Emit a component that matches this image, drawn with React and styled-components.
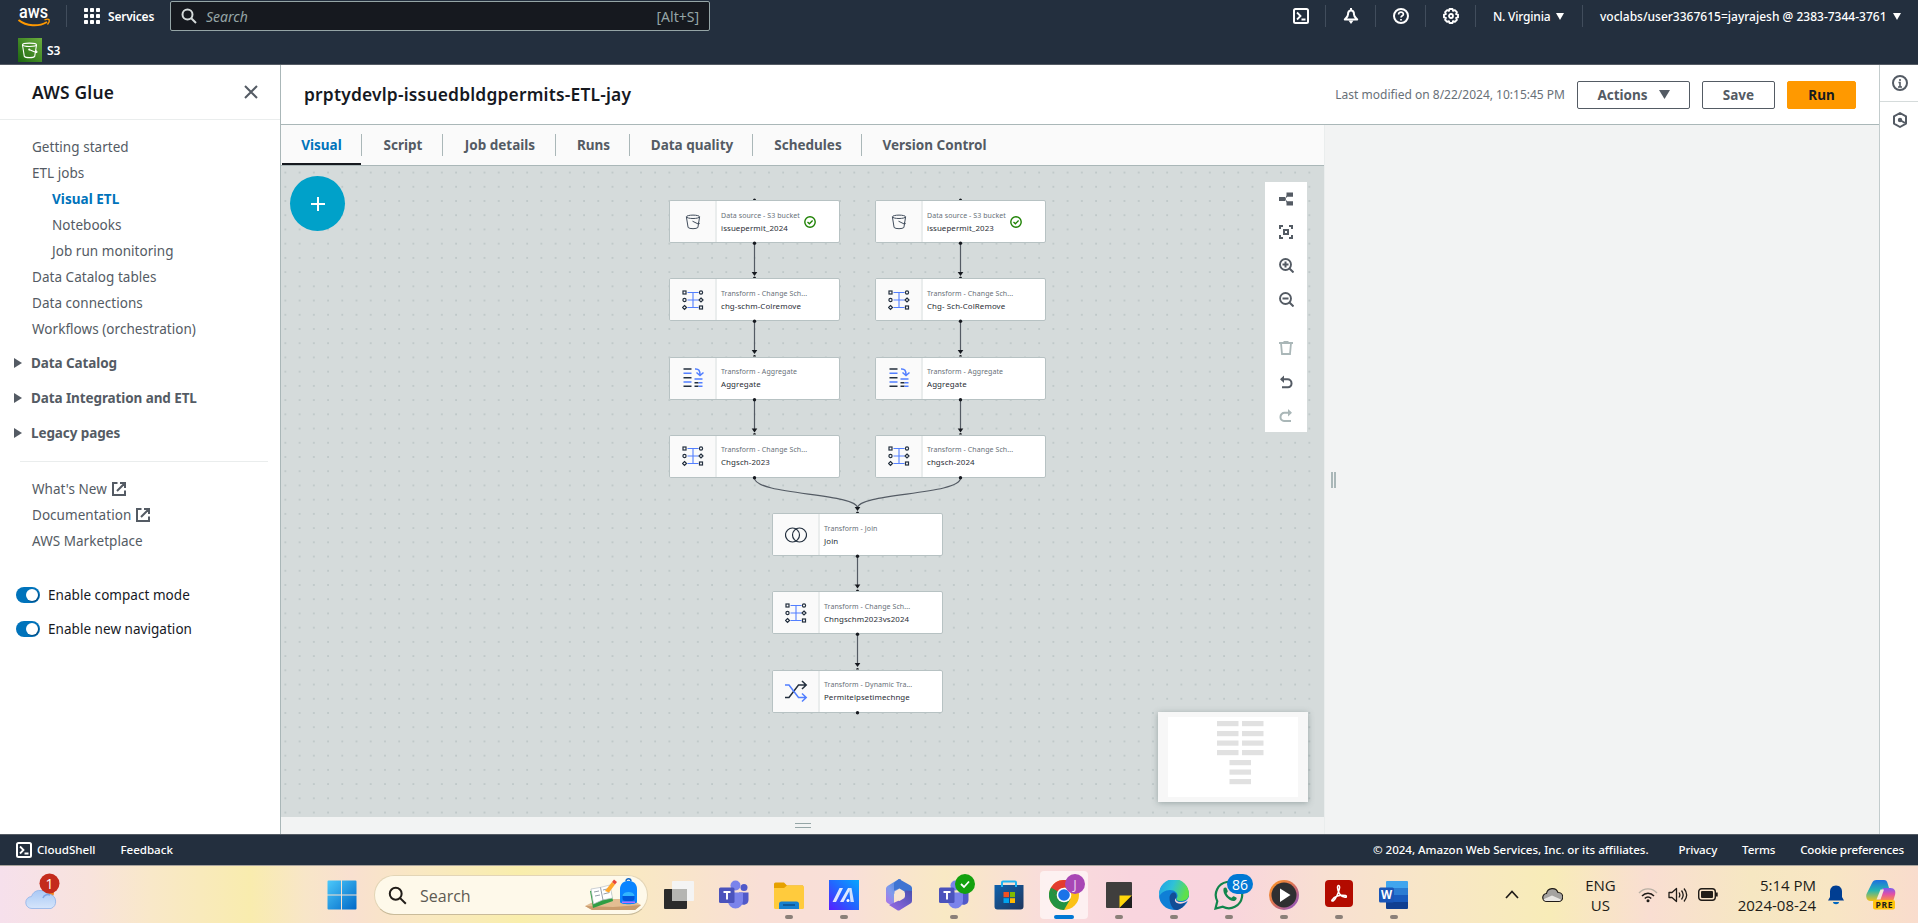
import React from "react";
import styled, { createGlobalStyle, css } from "styled-components";

const GlobalStyle = createGlobalStyle`
  *, *::before, *::after { box-sizing: border-box; }
  html, body { margin: 0; padding: 0; background: #fff; overflow: hidden; }
  body { font-family: "Noto Sans", "Open Sans", sans-serif; font-size: 14px; color: #16191f; }
  svg { display: block; flex: none; }
`;

const ember = css`
  font-family: "Noto Sans", "Open Sans", sans-serif;
  white-space: nowrap;
`;

const Screen = styled.div`
  width: 1918px;
  height: 923px;
  display: flex;
  flex-direction: column;
  overflow: hidden;
`;

/* ---------- console header ---------- */

const ConsoleHeader = styled.header`
  height: 65px;
  background: #232f3e;
  border-bottom: 1px solid #545b64;
  flex: none;
`;

const HeaderRow = styled.div`
  height: 32px;
  display: flex;
  align-items: center;
`;

const LogoBox = styled.div`
  width: 67px;
  height: 22px;
  padding-left: 18px;
  border-right: 1px solid #414d5c;
`;

const ServicesButton = styled.div`
  ${ember}
  display: flex;
  align-items: center;
  gap: 8px;
  width: 103px;
  padding-left: 17px;
  color: #fff;
  font-size: 12px;
  font-weight: 600;
  letter-spacing: -0.2px;
`;

const SearchBox = styled.div`
  ${ember}
  width: 540px;
  height: 30px;
  border: 1px solid #95a5a6;
  border-radius: 2px;
  background: #16191f;
  display: flex;
  align-items: center;
  padding: 0 10px 0 10px;
  color: #95a5a6;
  font-size: 14px;
`;

const SearchHint = styled.span`
  flex: 1;
  margin-left: 9px;
  font-style: italic;
`;

const HeaderTools = styled.div`
  margin-left: auto;
  display: flex;
  align-items: center;
`;

const HeaderCell = styled.div`
  ${ember}
  width: ${(p) => p.$w}px;
  height: 22px;
  display: flex;
  align-items: center;
  gap: 6px;
  padding-left: 17px;
  color: #fff;
  font-size: 12px;
  font-weight: 500;
  letter-spacing: ${(p) => p.$ls || 0}px;
  border-right: ${(p) => (p.$last ? "none" : "1px solid #414d5c")};
`;

const FavoritesRow = styled.div`
  ${ember}
  height: 32px;
  display: flex;
  align-items: center;
  gap: 5px;
  padding: 4px 0 0 18px;
  color: #fff;
  font-size: 12px;
  font-weight: 600;
`;

/* ---------- page frame ---------- */

const Body = styled.div`
  height: 769px;
  display: flex;
  flex: none;
`;

const SideNav = styled.nav`
  width: 281px;
  flex: none;
  background: #fff;
  border-right: 1px solid #aab7b8;
  display: flex;
  flex-direction: column;
`;

const SideHeader = styled.div`
  ${ember}
  height: 55px;
  display: flex;
  align-items: center;
  justify-content: space-between;
  padding: 0 22px 0 32px;
  border-bottom: 1px solid #eaeded;
  font-size: 17.4px;
  font-weight: 600;
  letter-spacing: 0.2px;
`;

const NavList = styled.div`
  padding: ${(p) => p.$top}px 0 0 32px;
`;

const NavLink = styled.div`
  ${ember}
  height: 26px;
  display: flex;
  align-items: center;
  gap: 5px;
  padding-left: ${(p) => (p.$sub ? 20 : 0)}px;
  font-size: 13.5px;
  letter-spacing: 0.04px;
  color: ${(p) => (p.$active ? "#0073bb" : "#545b64")};
  font-weight: ${(p) => (p.$active ? 700 : 400)};
`;

const NavSections = styled.div`
  padding: 3px 0 1px;
`;

const NavSection = styled.div`
  ${ember}
  height: 35px;
  display: flex;
  align-items: center;
  gap: 9px;
  padding-left: 14px;
  font-size: 13.5px;
  font-weight: 700;
  letter-spacing: -0.1px;
  color: #545b64;
`;

const NavRule = styled.div`
  height: 1px;
  margin: 10px 12px 0 20px;
  background: #eaeded;
`;

const Preferences = styled.div`
  padding-top: 24px;
`;

const ToggleRow = styled.div`
  ${ember}
  height: 34px;
  display: flex;
  align-items: center;
  gap: 8px;
  padding-left: 16px;
  font-size: 13.5px;
  letter-spacing: 0.04px;
  color: #16191f;
`;

const Toggle = styled.span`
  width: 24px;
  height: 16px;
  border-radius: 8px;
  background: #0073bb;
  display: flex;
  justify-content: flex-end;
  padding: 2px;
  &::after {
    content: "";
    width: 12px;
    height: 12px;
    border-radius: 50%;
    background: #fff;
    box-shadow: 1px 1px 1px rgba(0, 40, 80, 0.5);
  }
`;

const Main = styled.main`
  flex: 1;
  min-width: 0;
  display: flex;
  flex-direction: column;
`;

const JobHeader = styled.div`
  ${ember}
  height: 60px;
  flex: none;
  background: #fff;
  border-bottom: 1px solid #aab7b8;
  display: flex;
  align-items: center;
  padding: 0 23px 0 23px;
`;

const JobTitle = styled.h1`
  margin: 0;
  flex: 1;
  padding-bottom: 2px;
  font-size: 17.4px;
  font-weight: 600;
  letter-spacing: 0.2px;
  color: #16191f;
`;

const Modified = styled.span`
  font-size: 12px;
  color: #687078;
  margin-right: 12px;
  padding-bottom: 1px;
`;

const Button = styled.div`
  width: ${(p) => p.$w}px;
  height: 28px;
  margin-left: ${(p) => (p.$first ? 0 : 12)}px;
  display: flex;
  align-items: center;
  justify-content: center;
  gap: 11px;
  border: 1px solid ${(p) => (p.$primary ? "#ff9900" : "#545b64")};
  border-radius: 2px;
  background: ${(p) => (p.$primary ? "#ff9900" : "#fff")};
  color: ${(p) => (p.$primary ? "#16191f" : "#545b64")};
  font-size: 13.5px;
  font-weight: 700;
`;

const Workspace = styled.div`
  flex: 1;
  display: flex;
  min-height: 0;
`;

const Editor = styled.div`
  width: 1044px;
  flex: none;
  display: flex;
  flex-direction: column;
  border-right: 1px solid #eaeded;
`;

const TabBar = styled.div`
  height: 41px;
  flex: none;
  display: flex;
  align-items: center;
  background: #fafafa;
  border-bottom: 1px solid #aab7b8;
  padding-left: 1px;
`;

const Tab = styled.div`
  ${ember}
  width: ${(p) => p.$w}px;
  height: 40px;
  display: flex;
  align-items: center;
  justify-content: center;
  font-size: 13.5px;
  font-weight: 700;
  color: ${(p) => (p.$active ? "#0073bb" : "#545b64")};
  border-bottom: 2px solid ${(p) => (p.$active ? "#16191f" : "transparent")};
  padding: 1px 0 0 ${(p) => (p.$active ? 0 : 2)}px;
`;

const TabDivider = styled.span`
  width: 1px;
  height: 22px;
  background: #aab7b8;
`;

const Canvas = styled.div`
  position: relative;
  height: 651px;
  flex: none;
  background: #d5dbdb;
`;

const EdgeLayer = styled.svg`
  position: absolute;
  left: 0;
  top: 0;
`;

const AddButton = styled.div`
  position: absolute;
  left: 9px;
  top: 10px;
  width: 55px;
  height: 55px;
  border-radius: 50%;
  background: #00a1c9;
  display: flex;
  align-items: center;
  justify-content: center;
`;

const NodeCard = styled.div`
  position: absolute;
  left: ${(p) => p.$x}px;
  top: ${(p) => p.$y}px;
  width: 171px;
  height: 43px;
  display: flex;
  background: #fff;
  border: 1px solid #b7c2c3;
  border-radius: 2px;
  overflow: hidden;
`;

const NodeIcon = styled.div`
  width: 47px;
  flex: none;
  background: #fafafa;
  border-right: 2px solid #eaeded;
  display: flex;
  align-items: center;
  justify-content: center;
`;

const NodeText = styled.div`
  ${ember}
  padding-left: 4px;
  display: flex;
  flex-direction: column;
  justify-content: center;
  line-height: 12px;
`;

const NodeKind = styled.span`
  font-size: 7px;
  letter-spacing: 0.08px;
  color: #687078;
`;

const NodeName = styled.span`
  font-size: 7.9px;
  letter-spacing: 0.1px;
  color: #2a2e36;
`;

const NodeStatus = styled.div`
  display: flex;
  align-items: center;
  margin-left: 4px;
`;

const ToolPanel = styled.div`
  position: absolute;
  left: 984px;
  top: 16px;
  width: 42px;
  height: 250px;
  background: #fff;
  display: flex;
  flex-direction: column;
  align-items: center;
`;

const ToolButton = styled.div`
  height: 33.7px;
  margin-top: ${(p) => p.$gap || 0}px;
  display: flex;
  align-items: center;
  justify-content: center;
`;

const MiniMap = styled.div`
  position: absolute;
  left: 877px;
  top: 546px;
  width: 150px;
  height: 90px;
  padding: 5px 10px;
  background: #f7f7f7;
  box-shadow: 0 1px 6px rgba(80, 100, 100, 0.45);
`;

const MiniView = styled.div`
  height: 80px;
  background: #fff;
`;

const BottomHandle = styled.div`
  flex: 1;
  background: #f2f3f3;
  display: flex;
  justify-content: center;
  padding: 5px 0 0 1px;
`;

const Grip = styled.span`
  width: ${(p) => (p.$vertical ? 5 : 16)}px;
  height: ${(p) => (p.$vertical ? 16 : 5)}px;
  margin-top: ${(p) => (p.$vertical ? 0 : 1)}px;
  border: solid ${(p) => (p.$vertical ? "#aab7b8" : "#95a5a6")};
  border-width: ${(p) => (p.$vertical ? "0 2px" : "1px 0")};
`;

const SidePanel = styled.div`
  flex: 1;
  background: #f2f3f3;
  display: flex;
  align-items: center;
  padding-left: 6px;
`;

const Rail = styled.aside`
  width: 39px;
  flex: none;
  background: #fff;
  border-left: 1px solid #c3cccd;
`;

const RailCell = styled.div`
  height: ${(p) => (p.$line ? 37 : 35)}px;
  display: flex;
  align-items: center;
  justify-content: center;
  padding-left: 2px;
  border-bottom: ${(p) => (p.$line ? "1px solid #d5dbdb" : "none")};
`;

/* ---------- footer ---------- */

const Footer = styled.footer`
  ${ember}
  height: 32px;
  flex: none;
  background: #232f3e;
  border-top: 1px solid #545b64;
  border-bottom: 1px solid #a9a39c;
  display: flex;
  align-items: center;
  padding: 0 14px 0 16px;
  color: #fff;
  font-size: 11.6px;
  letter-spacing: -0.16px;
  font-weight: 500;
`;

const FooterGroup = styled.div`
  display: flex;
  gap: ${(p) => p.$gap}px;
  margin-left: ${(p) => p.$ml || "0"};
  padding-bottom: 1px;
  letter-spacing: ${(p) => p.$ls || "inherit"};
`;

const Copyright = styled.span`
  margin-right: 5px;
  letter-spacing: -0.04px;
`;

/* ---------- taskbar ---------- */

const Taskbar = styled.div`
  height: 57px;
  flex: none;
  display: flex;
  align-items: stretch;
  font-family: "Open Sans", "Noto Sans", sans-serif;
  background: linear-gradient(
    90deg,
    #f6e0ec 0, #f8e3dc 90px, #f9e8c9 150px, #f9ecae 250px, #f8e6c8 305px, #f9e0d0 350px,
    #f9e9c0 430px, #f9eeac 520px, #f9e8c4 640px, #f9dfd6 760px, #f9dfd8 850px, #f9e9c4 945px,
    #f9dcdc 1050px, #f9d5de 1130px, #f9d4de 1220px, #f8dfd2 1320px, #f8e6c8 1420px, #f8ecb8 1550px,
    #f9ded2 1650px, #f6e7c2 1750px, #f8e6c4 1830px, #f9dccd 1918px
  );
`;

const Weather = styled.div`
  width: 319px;
  padding: 7px 0 0 25px;
`;

const AppSlot = styled.div`
  position: relative;
  width: ${(p) => p.$w || 55}px;
  display: flex;
  align-items: center;
  justify-content: center;
  padding-top: 1px;
  > svg { position: relative; }
`;

const ActivePlate = styled.div`
  position: absolute;
  left: 4px;
  top: 5px;
  width: 48px;
  height: 48px;
  border-radius: 4px;
  background: rgba(255, 255, 255, 0.6);
`;

const Running = styled.i`
  position: absolute;
  bottom: 4px;
  left: 50%;
  width: ${(p) => (p.$on ? 20 : 8)}px;
  height: 4px;
  transform: translateX(-50%);
  border-radius: 2px;
  background: ${(p) => (p.$on ? "#0078d4" : "#8b8079")};
`;

const Badge = styled.span`
  position: absolute;
  left: ${(p) => p.$x}px;
  top: ${(p) => p.$y}px;
  width: ${(p) => p.$w}px;
  height: ${(p) => p.$h}px;
  border-radius: 12px;
  background: ${(p) => p.$bg};
  color: ${(p) => p.$fg || "#fff"};
  font-size: ${(p) => p.$fs || 14}px;
  display: flex;
  align-items: center;
  justify-content: center;
`;

const TaskSearch = styled.div`
  width: 274px;
  height: 40px;
  margin: 9px 3px 0 9px;
  border: 1px solid #e3d5b6;
  border-bottom-color: #c9bb9a;
  border-radius: 20px;
  background: #fef9ea;
  display: flex;
  align-items: center;
  padding: 0 5px 0 13px;
  color: #5d5a52;
  font-size: 16px;
`;

const TaskSearchLabel = styled.span`
  flex: 1;
  margin-left: 13px;
  padding-top: 1px;
`;

const Tray = styled.div`
  margin-left: auto;
  display: flex;
  align-items: center;
  padding-right: 22px;
  color: #201c18;
  font-size: 15px;
  line-height: 20px;
  white-space: nowrap;
`;

const TrayItem = styled.div`
  margin-left: ${(p) => p.$ml || 0}px;
  text-align: ${(p) => p.$align || "left"};
`;

/* ---------- icons ---------- */

const Svg = ({ w = 16, h, vb, children, ...rest }) => (
  <svg width={w} height={h || w} viewBox={vb || `0 0 ${w} ${h || w}`} fill="none" {...rest}>
    {children}
  </svg>
);

const AwsLogo = () => (
  <Svg w={33} h={22} overflow="visible">
    <text x="1" y="12.500" fontFamily="Roboto, sans-serif" fontWeight="500" fontSize="18" textLength="29" lengthAdjust="spacingAndGlyphs" fill="#fff">aws</text>
    <path d="M.5 15c8 6.500 20 7 28.500 2" stroke="#ff9900" strokeWidth="2" />
    <path d="M26.500 14.800c2.200-.8 4.200-.8 4.700 0 .4 1.500-.4 3.500-1.700 4.800" stroke="#ff9900" strokeWidth="1.400" />
  </Svg>
);

const GridIcon = () => (
  <Svg w={16}>
    {[0, 6, 12].map((y) => [0, 6, 12].map((x) => <rect key={`${x}-${y}`} x={x} y={y} width="4" height="4" rx=".8" fill="#fff" />))}
  </Svg>
);

const SearchIcon = ({ color = "#d5dbdb", size = 16, sw = 2 }) => (
  <Svg w={size} vb="0 0 16 16">
    <circle cx="6.500" cy="6.500" r="5" stroke={color} strokeWidth={sw} />
    <path d="M10 10l5 5" stroke={color} strokeWidth={sw} />
  </Svg>
);

const ShellIcon = () => (
  <Svg w={16}>
    <rect x="1" y="1" width="14" height="14" rx="1.500" stroke="#fff" strokeWidth="2" />
    <path d="M4 4.500l3.500 3.500L4 11.500M8.500 11.500h4" stroke="#fff" strokeWidth="1.800" />
  </Svg>
);

const BellIcon = () => (
  <Svg w={16}>
    <path d="M8 0v2.500M8 2.500C5.800 2.500 5 4.500 5 6.500c0 2-1.500 3-3.200 5h12.400C12.500 9.500 11 8.500 11 6.500c0-2-.8-4-3-4z" stroke="#fff" strokeWidth="2" strokeLinejoin="round" />
    <path d="M5.500 12.500h5L8 16z" fill="#fff" />
  </Svg>
);

const HelpIcon = () => (
  <Svg w={16}>
    <circle cx="8" cy="8" r="7" stroke="#fff" strokeWidth="2" />
    <path d="M5.600 6.400c0-3.200 4.800-3 4.800-.2C10.400 7.800 8 7.800 8 9.600M8 11v1.600" stroke="#fff" strokeWidth="1.700" />
  </Svg>
);

const GearIcon = () => (
  <Svg w={16}>
    <path d="M6.500 1h3l.6 1.900 1.800-.8 2 2-.8 1.900 1.900.6v2.800l-1.900.6.8 1.900-2 2-1.800-.8-.6 1.900h-3l-.6-1.900-1.800.8-2-2 .8-1.900L1 9.400V6.600l1.900-.6-.8-1.900 2-2 1.800.8z" stroke="#fff" strokeWidth="1.900" strokeLinejoin="round" />
    <circle cx="8" cy="8" r="2" stroke="#fff" strokeWidth="1.800" />
  </Svg>
);

const Caret = ({ color = "#fff", w = 8, h = 7 }) => (
  <Svg w={w} h={h} vb="0 0 8 7" preserveAspectRatio="none">
    <path d="M0 0h8L4 7z" fill={color} />
  </Svg>
);

const S3Icon = () => (
  <Svg w={24}>
    <defs>
      <linearGradient id="s3g" x1="0" y1="1" x2="1" y2="0">
        <stop offset="0" stopColor="#1b660f" />
        <stop offset="1" stopColor="#6cae3e" />
      </linearGradient>
    </defs>
    <rect width="24" height="24" fill="url(#s3g)" />
    <ellipse cx="11.500" cy="6.800" rx="7" ry="1.700" stroke="#fff" strokeWidth="1.100" />
    <path d="M4.500 7l1.800 11.300c1.500 1.800 8.900 1.800 10.400 0L18.500 7M11 11.500l6.500 2.800c2 .5 2-.7.200-1.800" stroke="#fff" strokeWidth="1.100" />
    <circle cx="11.200" cy="11.500" r="1" fill="#fff" />
  </Svg>
);

const CloseIcon = () => (
  <Svg w={14}>
    <path d="M1 1l12 12M13 1L1 13" stroke="#545b64" strokeWidth="2" />
  </Svg>
);

const ExternalIcon = () => (
  <Svg w={14}>
    <path d="M5.500 1H1v12h12V8.500M8 1h5v5M13 1L5 9" stroke="#545b64" strokeWidth="2" />
  </Svg>
);

const Triangle = () => (
  <Svg w={8} h={10}>
    <path d="M0 0l8 5-8 5z" fill="#545b64" />
  </Svg>
);

const InfoIcon = () => (
  <Svg w={16}>
    <circle cx="8" cy="8" r="7" stroke="#545b64" strokeWidth="2" />
    <path d="M8 4v2M6.500 7.500H8v4M6 12h4" stroke="#545b64" strokeWidth="1.600" />
  </Svg>
);

const HexIcon = () => (
  <Svg w={16}>
    <path d="M8 1l6 3.400v7.200L8 15l-6-3.400V4.400z" stroke="#545b64" strokeWidth="2" strokeLinejoin="round" />
    <circle cx="8" cy="8" r="2.200" fill="#545b64" />
    <path d="M8 8l5 3" stroke="#545b64" strokeWidth="2" />
  </Svg>
);

const BucketIcon = () => (
  <Svg w={16}>
    <ellipse cx="8" cy="2.800" rx="6.600" ry="1.700" stroke="#414d5c" />
    <path d="M1.400 3l1.700 10.500c1.400 1.600 8.400 1.600 9.800 0L14.600 3M7.500 7.200l5.500 2.700c2 .4 1.500-.6 0-1.700" stroke="#414d5c" />
  </Svg>
);

const SchemaIcon = () => (
  <Svg w={22}>
    <path d="M5.500 3.500h11M5.500 11h11M5.500 18.500h11M11 3.500v15" stroke="#527fff" strokeWidth="1.100" />
    <g stroke="#232f3e" strokeWidth="1.200" fill="#fff">
      <rect x="1" y="2" width="3" height="3" />
      <circle cx="2.500" cy="11" r="1.600" />
      <path d="M2.500 16.500l2 2-2 2-2-2z" />
      <circle cx="19" cy="3.500" r="1.600" />
      <path d="M19 9l2 2-2 2-2-2z" />
      <rect x="17.500" y="17" width="3" height="3" />
    </g>
  </Svg>
);

const AggregateIcon = () => (
  <Svg w={22}>
    <path d="M1.500 2h8M1.500 10.700h8M1.500 19.300h8M12.500 15.800h4M12.500 19.300h4" stroke="#232f3e" strokeWidth="1.500" />
    <path d="M1.500 6.300h8M1.500 15h8M12.500 12h8M16.500 15.800h4M16.500 19.300h4M13 2c4-.3 5 1.500 5 6M14.500 5.500L18 8.600l3.500-3.100" stroke="#527fff" strokeWidth="1.500" />
  </Svg>
);

const JoinIcon = () => (
  <Svg w={22}>
    <circle cx="7.500" cy="11" r="7" stroke="#232f3e" strokeWidth="1.200" />
    <circle cx="14.500" cy="11" r="7" stroke="#232f3e" strokeWidth="1.200" />
  </Svg>
);

const ShuffleIcon = () => (
  <Svg w={24}>
    <path d="M1 18.500h4L14.500 6H22M18 2l4.200 4L18 10" stroke="#232f3e" strokeWidth="1.500" />
    <path d="M1 6h4l9.500 12.500H22M18 14.500l4.200 4-4.200 4" stroke="#527fff" strokeWidth="1.500" />
  </Svg>
);

const CheckIcon = () => (
  <Svg w={12}>
    <circle cx="6" cy="6" r="5.200" stroke="#1d8102" strokeWidth="1.400" />
    <path d="M3.500 6l1.900 1.800L8.600 4.500" stroke="#1d8102" strokeWidth="1.300" />
  </Svg>
);

const TOOL_GREY = "#545b64";
const TOOL_OFF = "#aab7b8";

const tools = [
  <Svg w={14}>
    <path d="M3 7h3l3-4.500M6 7l3 4.500" stroke={TOOL_GREY} />
    <path d="M0 5h6v4H0zM7.500 .6H14v4.200H7.500zM7.500 9.200H14v4.200H7.500z" fill={TOOL_GREY} />
  </Svg>,
  <Svg w={14}>
    <path d="M1 4V1h3M10 1h3v3M13 10v3h-3M4 13H1v-3M5 5h4v4H5z" stroke={TOOL_GREY} strokeWidth="2" />
  </Svg>,
  <Svg w={15}>
    <circle cx="6.500" cy="6.500" r="5.500" stroke={TOOL_GREY} strokeWidth="1.900" />
    <path d="M3.500 6.500h6M6.500 3.500v6M10.500 10.500l4 4" stroke={TOOL_GREY} strokeWidth="2" />
  </Svg>,
  <Svg w={15}>
    <circle cx="6.500" cy="6.500" r="5.500" stroke={TOOL_GREY} strokeWidth="1.900" />
    <path d="M3.500 6.500h6M10.500 10.500l4 4" stroke={TOOL_GREY} strokeWidth="2" />
  </Svg>,
  <Svg w={14}>
    <path d="M0 2h14M4.500 1h5M2 2l1 11h8l1-11" stroke={TOOL_OFF} strokeWidth="1.800" />
  </Svg>,
  <Svg w={14}>
    <path d="M2 4.200h6.500a4 4 0 0 1 4 4v.6a3.500 3.500 0 0 1-3.500 3.500H3" stroke={TOOL_GREY} strokeWidth="2" />
    <path d="M5 .5v7.400L1 4.200z" fill={TOOL_GREY} />
  </Svg>,
  <Svg w={14}>
    <path d="M12 4.800H5.500a4 4 0 0 0-4 4v.6a3.500 3.500 0 0 0 3.500 3.500h7" stroke={TOOL_OFF} strokeWidth="2" />
    <path d="M9 1.100v7.400l4-3.700z" fill={TOOL_OFF} />
  </Svg>,
];

/* ---------- taskbar artwork ---------- */

const WeatherArt = () => (
  <Svg w={40} h={40}>
    <defs>
      <linearGradient id="cloud" x1="0" y1="0" x2="0" y2="1">
        <stop offset="0" stopColor="#a9c8f5" />
        <stop offset="1" stopColor="#d5e5fb" />
      </linearGradient>
    </defs>
    <circle cx="24" cy="20" r="5" fill="#f58a1f" />
    <path d="M7 35.500a6 6 0 0 1-.5-12A9 9 0 0 1 22 20.500a8 8 0 0 1 3 .8 7.500 7.500 0 0 1 1 14.200z" fill="url(#cloud)" stroke="#8fb2e8" strokeWidth=".8" />
    <path d="M18 25c1-3 4-4 7-3" stroke="#7fa5e4" strokeWidth="1.500" />
    <circle cx="24.500" cy="10.500" r="10" fill="#c42b1c" />
    <text x="24.500" y="15.500" fontSize="14" fill="#fff" textAnchor="middle" fontFamily="Open Sans, sans-serif">1</text>
  </Svg>
);

const StartArt = () => (
  <Svg w={30}>
    <defs>
      <linearGradient id="win" x1="0" y1="0" x2="1" y2="1">
        <stop offset="0" stopColor="#4cc9fa" />
        <stop offset="1" stopColor="#0068c8" />
      </linearGradient>
    </defs>
    <path d="M.5 1.500A1 1 0 0 1 1.500.5H14v14H.5zM15 .5h13.500a1 1 0 0 1 1 1v13H15zM.5 15.500H14v14H1.500a1 1 0 0 1-1-1zM15 15.500h14.500v13a1 1 0 0 1-1 1H15z" fill="url(#win)" />
  </Svg>
);

const SchoolArt = () => (
  <Svg w={58} h={34}>
    <path d="M1 28l14-7h32l10 6-6 5H8z" fill="#e3bd92" />
    <path d="M8 32h43l6-5-28 2-28-1z" fill="#c99b6d" />
    <path d="M6 13l20-4 3 14-20 7z" fill="#2f9e44" />
    <path d="M7 11l9-1.500 10-2.500 2.500 13-10 2-9 4z" fill="#fff" stroke="#b7bec6" strokeWidth=".7" />
    <path d="M16.500 9.500L19 22M10 14l5-1M11 18l5-1M19 12l6-1.500M19.500 16l6-1.500" stroke="#8a94a0" strokeWidth=".9" />
    <path d="M21 13l7-9 3 2.500-6 8z" fill="#ffa62b" />
    <path d="M28 4l2-2.500L33 4l-2 2.500z" fill="#e8473a" />
    <path d="M36 11c0-11 17-11 17 0v13c0 3-17 3-17 0z" fill="#0a84ff" />
    <path d="M42 3c0-3 5-3 5 0" stroke="#1067c7" strokeWidth="1.400" />
    <rect x="38.500" y="15" width="12" height="8" rx="3" fill="#0057d9" />
    <path d="M38.500 17c1-4 11-4 12 0v1h-12z" fill="#32b5ff" />
    <path d="M38 23.500h13V25H38z" fill="#b96cff" />
  </Svg>
);

const TaskViewArt = () => (
  <Svg w={30}>
    <rect x="0" y="9" width="23" height="20" rx="1" fill="#2b2b2b" />
    <rect x="8" y="1" width="22" height="20" rx="1" fill="#f4f4f4" />
    <rect x="8" y="9" width="15" height="12" fill="#b5b5b2" />
  </Svg>
);

const TeamsArt = () => (
  <Svg w={30}>
    <circle cx="25" cy="7.500" r="3.500" fill="#5059c9" />
    <path d="M20 12.500h9.500V20a5 5 0 0 1-9.500 2z" fill="#5059c9" />
    <circle cx="16.500" cy="5.500" r="5" fill="#7b83eb" />
    <path d="M9 12.500h15V21a7.500 7.500 0 0 1-15 0z" fill="#7b83eb" />
    <rect x="0" y="7.500" width="15.500" height="15.500" rx="1.500" fill="#4b53bc" />
    <path d="M4.500 12h7M8 12v7.500" stroke="#fff" strokeWidth="1.900" />
  </Svg>
);

const FolderArt = () => (
  <Svg w={30}>
    <path d="M0 4a1.500 1.500 0 0 1 1.500-1.500H10l3 3h16V15H0z" fill="#e6a100" />
    <path d="M0 8h10l3-2.500h15.500A1.500 1.500 0 0 1 30 7v20.500A1.500 1.500 0 0 1 28.500 29h-27A1.500 1.500 0 0 1 0 27.500z" fill="#ffcb3d" />
    <path d="M5 29v-5a2.500 2.500 0 0 1 2.500-2.500h15A2.500 2.500 0 0 1 25 24v5z" fill="#1780cf" />
    <path d="M9 25h12" stroke="#0b4a83" strokeWidth="1.400" />
  </Svg>
);

const MyAsusArt = () => (
  <Svg w={30}>
    <defs>
      <linearGradient id="asus" x1="0" y1="1" x2="1" y2="0">
        <stop offset="0" stopColor="#5a1dff" />
        <stop offset=".5" stopColor="#2266ff" />
        <stop offset="1" stopColor="#05a7ff" />
      </linearGradient>
    </defs>
    <rect width="30" height="30" fill="url(#asus)" />
    <path d="M3.500 22L10.500 8H14L7 22zM11 22L19 8h3l-7.500 14z" fill="#fff" opacity=".85" />
    <path d="M20 8h2.500L25 22h-3.500z" fill="#cfe0ff" />
    <circle cx="19" cy="20.500" r="1.500" fill="#fff" />
  </Svg>
);

const M365Art = () => (
  <Svg w={32}>
    <defs>
      <linearGradient id="m3a" x1=".8" y1="0" x2="0" y2="1">
        <stop offset="0" stopColor="#4a83d8" />
        <stop offset=".5" stopColor="#7f9cec" />
        <stop offset="1" stopColor="#b56be8" />
      </linearGradient>
      <linearGradient id="m3b" x1="0" y1="1" x2="1" y2="0">
        <stop offset="0" stopColor="#9a6be6" />
        <stop offset="1" stopColor="#4a50b0" />
      </linearGradient>
    </defs>
    <path d="M16 0l2 .6V11l-7 4v13L4.500 24Q3 23 3 21.500V9.500Q3 8 4.500 7z" fill="url(#m3a)" />
    <path d="M16 0l11.500 6.500Q29 7.500 29 9v9l-7-4-6-4.500-5 2V4z" fill="#3f74d2" />
    <path d="M29 12v10q0 1.500-1.500 2.500L17 31q-1.500 1-3 0l-8-5 10-4.500 6-4v-6z" fill="url(#m3b)" />
    <path d="M16.500 9.500l5 3v6.500l-5 3-5-3v-6.500z" fill="#f9e6d2" />
  </Svg>
);

const StoreArt = () => (
  <Svg w={30}>
    <defs>
      <linearGradient id="sto" x1="0" y1="0" x2="1" y2="1">
        <stop offset="0" stopColor="#0f62ae" />
        <stop offset="1" stopColor="#20365c" />
      </linearGradient>
    </defs>
    <path d="M8 7V2.500A1 1 0 0 1 9 1.500h12a1 1 0 0 1 1 1V7" stroke="#1fb4f2" strokeWidth="2" />
    <path d="M.5 5h29v21.500a3 3 0 0 1-3 3h-23a3 3 0 0 1-3-3z" fill="url(#sto)" />
    <path d="M7 5h2v2H7zM21 5h2v2h-2z" fill="#1fb4f2" />
    <path d="M9.500 12H15v5.200H9.500z" fill="#f25022" />
    <path d="M16 12h5v5.200h-5z" fill="#7fba00" />
    <path d="M9.500 18.200H15V23H9.500z" fill="#00a4ef" />
    <path d="M16 18.200h5V23h-5z" fill="#ffb900" />
  </Svg>
);

const ChromeArt = () => (
  <Svg w={30}>
    <circle cx="15" cy="15" r="15" fill="#fbc116" />
    <path d="M2 7.500A15 15 0 0 0 15 30l6.500-11.300L15 15z" fill="#229342" />
    <path d="M2 7.500A15 15 0 0 1 28 7.500H15v7.500L8.500 18.700z" fill="#e33b2e" />
    <path d="M2 7.500L8.500 18.700 15 15z" fill="#229342" />
    <circle cx="15" cy="15" r="7.300" fill="#fff" />
    <circle cx="15" cy="15" r="5.800" fill="#1a73e8" />
  </Svg>
);

const StickyArt = () => (
  <Svg w={26}>
    <rect width="26" height="26" rx="1" fill="#3f3e3d" />
    <path d="M13.500 26V13.500H26z" fill="#ffd60a" />
    <path d="M13.500 26L26 13.500V26z" fill="#1f1f1f" />
  </Svg>
);

const EdgeArt = () => (
  <Svg w={30}>
    <defs>
      <linearGradient id="edg" x1="0" y1="0" x2="1" y2=".3">
        <stop offset="0" stopColor="#1f9fe6" />
        <stop offset=".5" stopColor="#2fc1d8" />
        <stop offset="1" stopColor="#5fe04a" />
      </linearGradient>
    </defs>
    <circle cx="15" cy="15" r="15" fill="#0f7fd6" />
    <path d="M0 14A15 15 0 0 1 30 14c0 5-4 7-8 7-3 0-5-1-4.500-2.500C20 16 18 10 11 10 6 10 1.500 13 0 17z" fill="url(#edg)" />
    <path d="M10.500 18c0-4 3-6 5-5.500 2 1 2.500 4 1.500 6-.5 2 2 3.500 5 3.500 2.500 0 4.500-1 5.800-1.600C26 26 21 30 17 30c-4-1-6.500-7-6.500-12z" fill="#124d96" />
    <path d="M17 18c-1 3 3 4.500 6 4 3-.5 5-1.500 7-5l1 4-3.500.5C25 23.500 21 24.500 18 23c-2-1-3-3-1-5z" fill="#f9d5de" />
  </Svg>
);

const WhatsAppArt = () => (
  <Svg w={30}>
    <path d="M1.500 28.500l1.800-7.300A13.200 13.200 0 1 1 8.800 26.700z" stroke="#12854d" strokeWidth="2.200" />
    <path d="M9.500 8.500c1-1.500 2.800-1.500 3.300 0l1 2.800c0 1-1.500 1.500-1 2.500 1 2 2.500 3.200 4.500 4 1 0 1.500-1.800 2.500-1.500l2.500 1.300c1 .7 0 3-2 3.400-5 .5-12-6.500-10.800-12.500z" fill="#12854d" />
  </Svg>
);

const MediaArt = () => (
  <Svg w={30}>
    <defs>
      <linearGradient id="med" x1="0" y1="0" x2="1" y2="1">
        <stop offset="0" stopColor="#ff9a1f" />
        <stop offset=".5" stopColor="#d9705a" />
        <stop offset="1" stopColor="#7d4fd8" />
      </linearGradient>
    </defs>
    <circle cx="15" cy="15" r="15" fill="url(#med)" />
    <circle cx="15" cy="15" r="12.500" fill="#2f2f31" />
    <path d="M11 8.500l10.500 6.500L11 22z" fill="#fff" />
  </Svg>
);

const AcrobatArt = () => (
  <Svg w={28} h={30}>
    <rect y="0" width="28" height="27" rx="4" fill="#b30b00" />
    <path d="M7 20c2-3.500 8-5.500 13.500-4.500 1.500.5 1 2-.5 1.800-4 0-7.300-4.800-7.500-9.600-.2-3 2.300-3 2.100 0C14 12.500 10.500 19.500 8 21c-1 .3-1.500-.2-1-1z" stroke="#fff" strokeWidth="1.500" />
  </Svg>
);

const WordArt = () => (
  <Svg w={30}>
    <path d="M7 2a1 1 0 0 1 1-1h20a1 1 0 0 1 1 1v6.500H7z" fill="#41a5ee" />
    <path d="M7 8h22v7H7z" fill="#2b7cd3" />
    <path d="M7 15h22v7H7z" fill="#185abd" />
    <path d="M7 22h22v6a1 1 0 0 1-1 1H8a1 1 0 0 1-1-1z" fill="#103f91" />
    <rect x="0" y="7.500" width="15" height="15" rx="1.500" fill="#1a56b8" />
    <text x="7.500" y="19" textAnchor="middle" fontSize="11.500" fontWeight="700" fontFamily="Open Sans, sans-serif" fill="#fff">W</text>
  </Svg>
);

const ChevronUp = () => (
  <Svg w={14} h={9}>
    <path d="M1 8l6-6.500L13 8" stroke="#201c18" strokeWidth="1.700" />
  </Svg>
);

const CloudIcon = () => (
  <Svg w={21} h={16}>
    <path d="M5 14.500a4 4 0 0 1-.5-8A6 6 0 0 1 16 5.500a4.500 4.500 0 0 1 .5 9z" fill="#a5a3a0" stroke="#201c18" strokeWidth="1.200" />
    <path d="M5 14c-2 0-3-.8-3.500-1.800L10 8.500l9 4c-.5 1-1.500 1.500-2.500 1.500z" fill="#e8e6e2" />
  </Svg>
);

const WifiIcon = () => (
  <Svg w={20} h={16}>
    <path d="M1 6c5-5.500 13-5.500 18 0" stroke="#b9b0a4" strokeWidth="1.400" />
    <path d="M4 9c3.300-3.700 8.700-3.700 12 0M6.800 11.600c1.900-2 4.500-2 6.400 0" stroke="#201c18" strokeWidth="1.500" />
    <circle cx="10" cy="13.800" r="1.500" fill="#201c18" />
  </Svg>
);

const SpeakerIcon = () => (
  <Svg w={20} h={16}>
    <path d="M1 5.500h3L8.500 1.500v13L4 10.500H1z" stroke="#201c18" strokeWidth="1.300" strokeLinejoin="round" />
    <path d="M11 5.500c1 1.500 1 3.500 0 5M13.500 3.500c2 2.700 2 6.300 0 9M16 1.500c3.300 4 3.300 9 0 13" stroke="#201c18" strokeWidth="1.300" />
  </Svg>
);

const BatteryIcon = () => (
  <Svg w={20} h={13}>
    <rect x=".7" y=".7" width="16.600" height="11.600" rx="3" stroke="#201c18" strokeWidth="1.400" />
    <rect x="3" y="3" width="12" height="7" rx="1" fill="#201c18" />
    <path d="M18.800 4.500v4" stroke="#201c18" strokeWidth="1.800" />
  </Svg>
);

const TrayBell = () => (
  <Svg w={18} h={20}>
    <path d="M9 .5c-4 0-6 3-6 6V12l-2 3.500h16L15 12V6.500c0-3-2-6-6-6z" fill="#003e92" />
    <path d="M6 17h6c0 3-6 3-6 0z" fill="#0067c0" />
  </Svg>
);

const CopilotArt = () => (
  <Svg w={30} h={30}>
    <defs>
      <linearGradient id="cpa" x1="0" y1="0" x2="0" y2="1">
        <stop offset="0" stopColor="#1d6fe0" />
        <stop offset=".5" stopColor="#27b5b0" />
        <stop offset="1" stopColor="#f2c21a" />
      </linearGradient>
      <linearGradient id="cpb" x1="0" y1="0" x2="0" y2="1">
        <stop offset="0" stopColor="#7b5cf0" />
        <stop offset=".5" stopColor="#e04fa8" />
        <stop offset="1" stopColor="#f98a4b" />
      </linearGradient>
    </defs>
    <path d="M6 3C7 1 8 0 10.500 0H18c2 0 3 1 3.500 3L23 8h-6l-5 13H5c-4 0-5.500-3-4.500-7z" fill="url(#cpa)" />
    <path d="M17 8h7.500c4 0 5.500 3 4.500 7l-1.500 5H12z" fill="url(#cpb)" />
    <path d="M14.500 9.500h3.500l-3.500 10h-4z" fill="#f6e7d8" />
    <rect x="7" y="20" width="22" height="9.500" rx="2" fill="#ffc40d" />
    <text x="18" y="27.800" textAnchor="middle" fontSize="8.500" fontWeight="700" fontFamily="Open Sans, sans-serif" fill="#201c18" textLength="17">PRE</text>
  </Svg>
);

/* ---------- data ---------- */

const nodes = [
  { x: 388, y: 34, kind: "Data source - S3 bucket", name: "issuepermit_2024", icon: BucketIcon, ok: true },
  { x: 594, y: 34, kind: "Data source - S3 bucket", name: "issuepermit_2023", icon: BucketIcon, ok: true },
  { x: 388, y: 112, kind: "Transform - Change Sch...", name: "chg-schm-Colremove", icon: SchemaIcon },
  { x: 594, y: 112, kind: "Transform - Change Sch...", name: "Chg- Sch-ColRemove", icon: SchemaIcon },
  { x: 388, y: 190.5, kind: "Transform - Aggregate", name: "Aggregate", icon: AggregateIcon },
  { x: 594, y: 190.5, kind: "Transform - Aggregate", name: "Aggregate", icon: AggregateIcon },
  { x: 388, y: 268.5, kind: "Transform - Change Sch...", name: "Chgsch-2023", icon: SchemaIcon },
  { x: 594, y: 268.5, kind: "Transform - Change Sch...", name: "chgsch-2024", icon: SchemaIcon },
  { x: 491, y: 347, kind: "Transform - Join", name: "Join", icon: JoinIcon },
  { x: 491, y: 425, kind: "Transform - Change Sch...", name: "Chngschm2023vs2024", icon: SchemaIcon },
  { x: 491, y: 503.5, kind: "Transform - Dynamic Tra...", name: "Permitelpsetimechnge", icon: ShuffleIcon },
];

const links = [
  [473.5, 77, 112], [473.5, 155, 190], [473.5, 233.5, 268.5],
  [679.5, 77, 112], [679.5, 155, 190], [679.5, 233.5, 268.5],
  [576.5, 390, 424.5], [576.5, 468, 503],
];

const tabs = [
  ["Visual", 79], ["Script", 80], ["Job details", 112], ["Runs", 73],
  ["Data quality", 122], ["Schedules", 108], ["Version Control", 143],
];

const apps = [
  { art: TaskViewArt }, { art: TeamsArt }, { art: FolderArt, run: true }, { art: MyAsusArt, run: true },
  { art: M365Art },
  { art: TeamsArt, run: true, badge: { x: 29, y: 8, w: 20, h: 20, bg: "#13a10e", check: true } },
  { art: StoreArt },
  { art: ChromeArt, run: true, on: true, badge: { x: 29, y: 8, w: 20, h: 20, bg: "#a847b5", fg: "#ecd3f0", text: "J", fs: 13 } },
  { art: StickyArt, run: true }, { art: EdgeArt, run: true },
  { art: WhatsAppArt, run: true, badge: { x: 26, y: 8, w: 26, h: 20, bg: "#0078d4", text: "86", fs: 14 } },
  { art: MediaArt, run: true }, { art: AcrobatArt, run: true }, { art: WordArt, run: true },
];

const Edges = () => (
  <EdgeLayer width="1043" height="651" viewBox="0 0 1043 651">
    <defs>
      <pattern id="dots" x="3.400" y="5.600" width="14.222" height="14.222" patternUnits="userSpaceOnUse">
        <circle cx="1" cy="1" r=".75" fill="#a3b0b1" />
      </pattern>
    </defs>
    <rect width="1030" height="651" fill="url(#dots)" />
    {links.map(([x, a, b]) => (
      <g key={`${x}-${a}`}>
        <path d={`M${x} ${a}V${b - 3}`} stroke="#545b64" strokeWidth="1.200" />
        <path d={`M${x - 2.8} ${b - 6}h5.600l-2.800 4z`} fill="#16191f" />
      </g>
    ))}
    <path d="M473.500 312C473.500 329 576.500 327 576.500 342M679.500 312C679.500 329 576.500 327 576.500 342" stroke="#545b64" strokeWidth="1.200" fill="none" />
    <path d="M573.700 341h5.600l-2.800 4z" fill="#16191f" />
  </EdgeLayer>
);

const Ports = () => (
  <EdgeLayer width="1043" height="651" viewBox="0 0 1043 651">
    {nodes.map((n) => (
      <g key={`${n.x}-${n.y}`} fill="#16191f">
        <path d={`M${n.x + 84} ${n.y}a1.500 1.500 0 0 1 3 0z`} />
        <circle cx={n.x + 85.5} cy={n.y + 43.3} r="1.700" />
      </g>
    ))}
  </EdgeLayer>
);

const bars = [0, 10, 19.5, 29]
  .flatMap((y) => [[49, y], [74, y]])
  .concat([[61.5, 39], [61.5, 48.5], [61.5, 58]]);

export default function App() {
  return (
    <Screen>
      <GlobalStyle />
      <ConsoleHeader>
        <HeaderRow>
          <LogoBox><AwsLogo /></LogoBox>
          <ServicesButton><GridIcon />Services</ServicesButton>
          <SearchBox>
            <SearchIcon />
            <SearchHint>Search</SearchHint>
            <span>[Alt+S]</span>
          </SearchBox>
          <HeaderTools>
            <HeaderCell $w={50}><ShellIcon /></HeaderCell>
            <HeaderCell $w={50}><BellIcon /></HeaderCell>
            <HeaderCell $w={50}><HelpIcon /></HeaderCell>
            <HeaderCell $w={50}><GearIcon /></HeaderCell>
            <HeaderCell $w={107} $ls={-0.2}>N. Virginia<Caret /></HeaderCell>
            <HeaderCell $w={335} $last>voclabs/user3367615=jayrajesh @ 2383-7344-3761<Caret /></HeaderCell>
          </HeaderTools>
        </HeaderRow>
        <FavoritesRow><S3Icon />S3</FavoritesRow>
      </ConsoleHeader>

      <Body>
        <SideNav>
          <SideHeader>AWS Glue<CloseIcon /></SideHeader>
          <NavList $top={14}>
            <NavLink>Getting started</NavLink>
            <NavLink>ETL jobs</NavLink>
            <NavLink $sub $active>Visual ETL</NavLink>
            <NavLink $sub>Notebooks</NavLink>
            <NavLink $sub>Job run monitoring</NavLink>
            <NavLink>Data Catalog tables</NavLink>
            <NavLink>Data connections</NavLink>
            <NavLink>Workflows (orchestration)</NavLink>
          </NavList>
          <NavSections>
            <NavSection><Triangle />Data Catalog</NavSection>
            <NavSection><Triangle />Data Integration and ETL</NavSection>
            <NavSection><Triangle />Legacy pages</NavSection>
          </NavSections>
          <NavRule />
          <NavList $top={14}>
            <NavLink>What's New<ExternalIcon /></NavLink>
            <NavLink>Documentation<ExternalIcon /></NavLink>
            <NavLink>AWS Marketplace</NavLink>
          </NavList>
          <Preferences>
            <ToggleRow><Toggle />Enable compact mode</ToggleRow>
            <ToggleRow><Toggle />Enable new navigation</ToggleRow>
          </Preferences>
        </SideNav>

        <Main>
          <JobHeader>
            <JobTitle>prptydevlp-issuedbldgpermits-ETL-jay</JobTitle>
            <Modified>Last modified on 8/22/2024, 10:15:45 PM</Modified>
            <Button $w={113} $first>Actions<Caret color="#545b64" w={11} h={9} /></Button>
            <Button $w={73}>Save</Button>
            <Button $w={69} $primary>Run</Button>
          </JobHeader>
          <Workspace>
            <Editor>
              <TabBar>
                {tabs.map(([label, w], i) => (
                  <React.Fragment key={label}>
                    {i > 0 && <TabDivider />}
                    <Tab $w={w} $active={i === 0}>{label}</Tab>
                  </React.Fragment>
                ))}
              </TabBar>
              <Canvas>
                <Edges />
                {nodes.map((n) => (
                  <NodeCard key={`${n.x}-${n.y}`} $x={n.x} $y={n.y}>
                    <NodeIcon><n.icon /></NodeIcon>
                    <NodeText>
                      <NodeKind>{n.kind}</NodeKind>
                      <NodeName>{n.name}</NodeName>
                    </NodeText>
                    {n.ok && <NodeStatus><CheckIcon /></NodeStatus>}
                  </NodeCard>
                ))}
                <Ports />
                <AddButton>
                  <Svg w={14}><path d="M0 7h14M7 0v14" stroke="#fff" strokeWidth="2" /></Svg>
                </AddButton>
                <ToolPanel>
                  {tools.map((icon, i) => <ToolButton key={i} $gap={i === 4 ? 15 : 0}>{icon}</ToolButton>)}
                </ToolPanel>
                <MiniMap>
                  <MiniView>
                    <Svg w={130} h={80}>
                      {bars.map(([x, y]) => <rect key={`${x}-${y}`} x={x} y={y + 4} width="21.500" height="5.200" fill="#e1e1e1" />)}
                    </Svg>
                  </MiniView>
                </MiniMap>
              </Canvas>
              <BottomHandle><Grip /></BottomHandle>
            </Editor>
            <SidePanel><Grip $vertical /></SidePanel>
          </Workspace>
        </Main>

        <Rail>
          <RailCell $line><InfoIcon /></RailCell>
          <RailCell><HexIcon /></RailCell>
        </Rail>
      </Body>

      <Footer>
        <ShellIcon />
        <FooterGroup $ml="5px" $gap={25} $ls="-0.02px">
          <span>CloudShell</span>
          <span>Feedback</span>
        </FooterGroup>
        <FooterGroup $ml="auto" $gap={25}>
          <Copyright>© 2024, Amazon Web Services, Inc. or its affiliates.</Copyright>
          <span>Privacy</span>
          <span>Terms</span>
          <span>Cookie preferences</span>
        </FooterGroup>
      </Footer>

      <Taskbar>
        <Weather><WeatherArt /></Weather>
        <AppSlot $w={46}><StartArt /></AppSlot>
        <TaskSearch>
          <SearchIcon color="#201c18" size={19} sw={1.7} />
          <TaskSearchLabel>Search</TaskSearchLabel>
          <SchoolArt />
        </TaskSearch>
        {apps.map((a, i) => (
          <AppSlot key={i}>
            {a.on && <ActivePlate />}
            <a.art />
            {a.run && <Running $on={a.on} />}
            {a.badge && (
              <Badge $x={a.badge.x} $y={a.badge.y} $w={a.badge.w} $h={a.badge.h} $bg={a.badge.bg} $fg={a.badge.fg} $fs={a.badge.fs}>
                {a.badge.check ? <Svg w={10}><path d="M1 5l3 3 5-5.500" stroke="#fff" strokeWidth="1.800" /></Svg> : a.badge.text}
              </Badge>
            )}
          </AppSlot>
        ))}
        <Tray>
          <ChevronUp />
          <TrayItem $ml={23}><CloudIcon /></TrayItem>
          <TrayItem $ml={22} $align="center">ENG<br />US</TrayItem>
          <TrayItem $ml={22}><WifiIcon /></TrayItem>
          <TrayItem $ml={10}><SpeakerIcon /></TrayItem>
          <TrayItem $ml={10}><BatteryIcon /></TrayItem>
          <TrayItem $ml={20} $align="right">5:14 PM<br />2024-08-24</TrayItem>
          <TrayItem $ml={11}><TrayBell /></TrayItem>
          <TrayItem $ml={21}><CopilotArt /></TrayItem>
        </Tray>
      </Taskbar>
    </Screen>
  );
}
